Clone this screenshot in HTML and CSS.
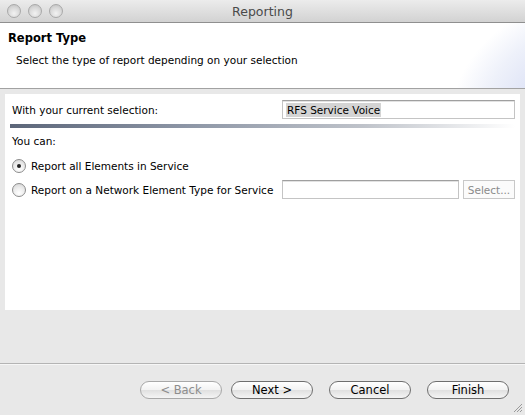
FILE: index.html
```html
<!DOCTYPE html>
<html>
<head>
<meta charset="utf-8">
<link rel="stylesheet" href="styles.css">
</head>
<body>
<div class="window">
  <div class="titlebar">
    <div class="lights"><span class="light"></span><span class="light"></span><span class="light"></span></div>
    <div class="title">Reporting</div>
  </div>
  <div class="header">
    <div class="h-title">Report Type</div>
    <div class="h-sub">Select the type of report depending on your selection</div>
  </div>
  <div class="body">
    <div class="panel">
      <div class="sel-row">
        <span class="lbl">With your current selection:</span>
        <div class="field wide"><span class="hl">RFS Service Voice</span></div>
      </div>
      <div class="gbar"></div>
      <div class="youcan">You can:</div>
      <div class="radio-row first">
        <span class="radio on"></span><span class="rlbl">Report all Elements in Service</span>
      </div>
      <div class="radio-row second">
        <span class="radio"></span><span class="rlbl grow">Report on a Network Element Type for Service</span>
        <div class="field narrow"></div>
        <div class="selbtn">Select...</div>
      </div>
    </div>
  </div>
  <div class="footer">
    <div class="btn disabled">&lt; Back</div>
    <div class="btn next">Next &gt;</div>
    <div class="btn cancel">Cancel</div>
    <div class="btn">Finish</div>
    <svg class="grip" width="10" height="10" viewBox="0 0 10 10">
      <path d="M9 1 L1 9 M9 4 L4 9 M9 7 L7 9" stroke="#9a9a9a" stroke-width="1"/>
    </svg>
  </div>
</div>
</body>
</html>
```

FILE: styles.css
```css
* { box-sizing: border-box; }
html, body { margin: 0; padding: 0; }
body {
  width: 525px;
  height: 415px;
  overflow: hidden;
  font-family: "DejaVu Sans", sans-serif;
  font-size: 10.5px;
  color: #000;
  background: #e8e8e8;
}
.window { width: 525px; height: 415px; display: flex; flex-direction: column; }

.titlebar {
  height: 23px;
  flex: none;
  background: linear-gradient(#ececec, #d2d2d2);
  border-bottom: 1px solid #8f8f8f;
  display: flex;
  align-items: center;
  position: relative;
}
.lights { display: flex; gap: 7px; padding-left: 7px; }
.light {
  width: 14px; height: 14px; border-radius: 50%;
  background: radial-gradient(circle at 50% 70%, #f2f2f2 0%, #d8d8d8 55%, #bdbdbd 100%);
  border: 1px solid #a9a9a9;
}
.title {
  position: absolute; left: 0; right: 0; top: 4px;
  text-align: center;
  font-size: 12.5px;
  color: #4a4a4a;
}

.header {
  height: 66px;
  flex: none;
  background:
    radial-gradient(ellipse 160px 130px at 610px 100px, #dbe1f5 0%, #dee3f6 55%, #eef1fa 80%, rgba(255,255,255,0) 100%),
    #fff;
  border-bottom: 1px solid #a2a2a2;
  padding: 8px 8px 0;
}
.h-title { font-weight: bold; font-size: 11.5px; line-height: 14px; }
.h-sub { margin-top: 8px; padding-left: 8px; line-height: 14px; }

.body {
  flex: 1;
  padding: 5px 5px 0;
  border-bottom: 1px solid #b4b4b4;
}
.panel {
  background: #fff;
  height: 216px;
  padding: 6px 5px 0 7px;
}
.sel-row { display: flex; align-items: center; justify-content: space-between; height: 19px; }
.field {
  height: 19px;
  background: #fff;
  border: 1px solid #c4c4c4;
  border-top-color: #9f9f9f;
  box-shadow: inset 0 1px 0 #e2e2e2;
  display: flex; align-items: center;
  padding-left: 3px;
  flex: none;
}
.wide { width: 233px; }
.hl { background: #d4d4d4; line-height: 14px; padding: 0 1px; }
.gbar {
  margin: 5px 0 0 -2px;
  height: 4px;
  background: linear-gradient(90deg, #5c6679 0%, #8d96a6 35%, #bfc3ca 70%, #ffffff 100%);
}
.youcan { margin-top: 6px; line-height: 14px; }
.radio-row { display: flex; align-items: center; height: 19px; white-space: nowrap; }
.radio-row.first { margin-top: 8px; }
.radio-row.second { margin-top: 5px; }
.radio {
  width: 14px; height: 14px; border-radius: 50%;
  border: 1px solid #8c8c8c;
  background: radial-gradient(circle at 50% 75%, #ffffff 0%, #ececec 50%, #d2d2d2 100%);
  margin-left: 0; margin-right: 5px;
  position: relative;
  flex: none;
}
.radio.on::after {
  content: ""; position: absolute; left: 4px; top: 4px;
  width: 4px; height: 4px; border-radius: 50%; background: #222;
}
.grow { flex: 1; }
.narrow { width: 177px; }
.selbtn {
  margin-left: 4px;
  width: 52px; height: 19px;
  border: 1px solid #c8c8c8;
  color: #8a8a8a;
  display: flex; align-items: center; justify-content: center;
  background: #fbfbfb;
  flex: none;
}

.footer {
  height: 51px;
  flex: none;
  border-top: 1px solid #f6f6f6;
  display: flex;
  align-items: flex-start;
  justify-content: flex-end;
  padding: 16px 16px 0 0;
  gap: 16px;
  position: relative;
}
.btn {
  width: 82px; height: 18px;
  border-radius: 9px;
  border: 1px solid #6f6f6f;
  background: linear-gradient(#ffffff 0%, #f2f2f2 50%, #e0e0e0 51%, #f4f4f4 100%);
  font-size: 11.5px;
  display: flex; align-items: center; justify-content: center;
  line-height: 14px;
}
.btn.disabled { color: #8d8d8d; border-color: #a8a8a8; margin-right: -7px; }
.grip { position: absolute; right: 2px; bottom: 2px; }
```
